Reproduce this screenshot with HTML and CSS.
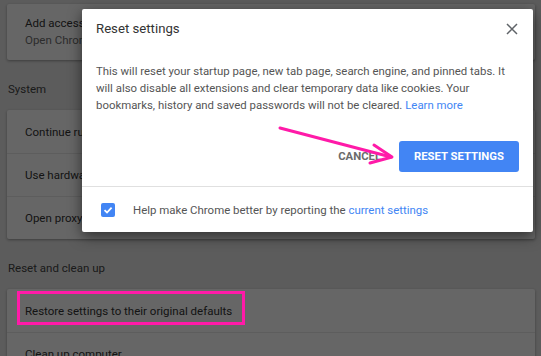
FILE: index.html
```html
<!DOCTYPE html>
<html lang="en">
<head>
    <meta charset="UTF-8">
    <title>Settings - Reset settings</title>
    <link rel="stylesheet" href="styles.css">
</head>
<body>

    <div class="page">
        <div class="card">
            <div class="row row-two">
                <div class="row-title">Add accessibility features</div>
                <div class="row-sub">Open Chrome Web Store</div>
            </div>
        </div>

        <h3 class="section">System</h3>
        <div class="card">
            <div class="row">Continue running background apps when Google Chrome is closed</div>
            <div class="row">Use hardware acceleration when available</div>
            <div class="row">Open proxy settings</div>
        </div>

        <h3 class="section">Reset and clean up</h3>
        <div class="card">
            <div class="row row-marked">
                Restore settings to their original defaults
                <span class="mark"></span>
            </div>
            <div class="row">Clean up computer</div>
        </div>
    </div>

    <div class="scrim"></div>

    <div class="dialog">
        <div class="dialog-head">
            <span class="dialog-title">Reset settings</span>
            <svg class="close" width="12" height="12" viewBox="0 0 12 12">
                <path d="M1 1 L11 11 M11 1 L1 11" stroke="#5f6368" stroke-width="1.5" fill="none"/>
            </svg>
        </div>
        <p class="dialog-text">
            This will reset your startup page, new tab page, search engine, and pinned tabs. It
            will also disable all extensions and clear temporary data like cookies. Your
            bookmarks, history and saved passwords will not be cleared. <a href="#">Learn more</a>
        </p>
        <div class="dialog-buttons">
            <button class="btn btn-flat">CANCEL</button>
            <button class="btn btn-blue">RESET SETTINGS</button>
        </div>
        <div class="dialog-foot">
            <span class="checkbox">
                <svg width="10" height="10" viewBox="0 0 10 10">
                    <path d="M1.5 5.2 L4 7.5 L8.6 2.6" stroke="#fff" stroke-width="1.8" fill="none"/>
                </svg>
            </span>
            <span>Help make Chrome better by reporting the <a href="#">current settings</a></span>
        </div>
    </div>

    <!-- annotation arrow -->
    <svg class="arrow" width="541" height="356" viewBox="0 0 541 356">
        <path d="M280 128 L391 157" stroke="#ff1aa8" stroke-width="3" fill="none" stroke-linecap="round"/>
        <path d="M374 145 L392 157 L370 163" stroke="#ff1aa8" stroke-width="3" fill="none" stroke-linecap="round" stroke-linejoin="round"/>
    </svg>

</body>
</html>
```

FILE: styles.css
```css
/* page */
body {
    margin: 0;
    font-family: Roboto, 'Liberation Sans', sans-serif;
    background: #e6e6e6;
    color: #333;
    width: 541px;
    height: 356px;
    overflow: hidden;
    position: relative;
}

.page {
    padding: 4px 6px 0 7px;
}

.card {
    background: #fff;
    border-radius: 2px;
    box-shadow: 0 1px 3px rgba(0, 0, 0, 0.35);
}

.row {
    height: 43px;
    display: flex;
    align-items: center;
    padding-left: 18px;
    font-size: 11.5px;
    white-space: nowrap;
    overflow: hidden;
    border-top: 1px solid #e8e8e8;
    box-sizing: border-box;
}

.row:first-child {
    border-top: none;
}

.row-two {
    height: 56px;
    flex-direction: column;
    align-items: flex-start;
    justify-content: center;
    line-height: 17px;
}

.row-sub {
    color: #6f6f6f;
}

.row-marked {
    position: relative;
    overflow: visible;
}

.section {
    margin: 0;
    padding: 21px 0 13px 1px;
    font-size: 11.5px;
    font-weight: 400;
    line-height: 16px;
    color: #444;
}

/* annotation box around the restore row */
.mark {
    position: absolute;
    left: 10px;
    top: 2px;
    width: 228px;
    height: 34px;
    border: 3px solid #ff1aa8;
    box-sizing: border-box;
    z-index: 3;
}

/* dark overlay */
.scrim {
    position: absolute;
    inset: 0;
    background: rgba(0, 0, 0, 0.6);
    z-index: 1;
}

/* dialog */
.dialog {
    position: absolute;
    left: 82px;
    top: 9px;
    width: 451px;
    height: 223px;
    background: #fff;
    border-radius: 2px;
    box-shadow: 0 4px 14px rgba(0, 0, 0, 0.55);
    z-index: 2;
    box-sizing: border-box;
    display: flex;
    flex-direction: column;
}

.dialog-head {
    display: flex;
    justify-content: space-between;
    align-items: center;
    padding: 10px 14px 10px 14px;
    height: 40px;
    box-sizing: border-box;
}

.dialog-title {
    font-size: 13.2px;
    line-height: 20px;
    color: #333;
}

.close {
    margin-right: 1px;
}

.dialog-text {
    margin: 14px 0 0;
    padding: 0 14px;
    font-size: 11.4px;
    line-height: 17px;
    color: #555;
}

a {
    color: #4285f4;
    text-decoration: none;
}

.dialog-buttons {
    display: flex;
    justify-content: flex-end;
    align-items: center;
    padding: 0 14px;
    margin-top: 27px;
}

.btn {
    font-family: Roboto, 'Liberation Sans', sans-serif;
    font-size: 11.3px;
    font-weight: 700;
    height: 31px;
    border: none;
    border-radius: 3px;
    padding: 0 16px;
    background: none;
    white-space: nowrap;
}

.btn-flat {
    color: #6b6b6b;
    padding-right: 18px;
}

.btn-blue {
    width: 120px;
    padding: 0;
    background: #4285f4;
    color: #fff;
}

.dialog-foot {
    margin-top: auto;
    height: 45px;
    border-top: 1px solid #e0e0e0;
    display: flex;
    align-items: center;
    padding-left: 19px;
    font-size: 11.45px;
    color: #555;
}

.checkbox {
    width: 14px;
    height: 14px;
    border-radius: 2px;
    background: #4285f4;
    display: flex;
    align-items: center;
    justify-content: center;
    margin-right: 18px;
}

.arrow {
    position: absolute;
    left: 0;
    top: 0;
    z-index: 4;
}
```
